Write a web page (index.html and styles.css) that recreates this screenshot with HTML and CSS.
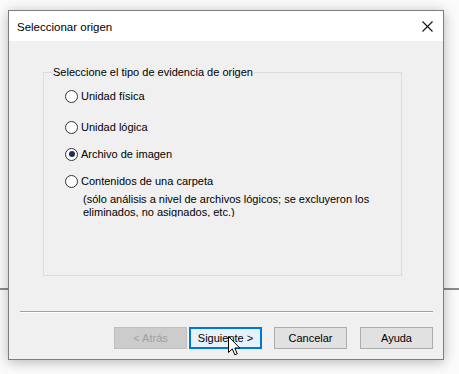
FILE: index.html
```html
<!DOCTYPE html>
<html lang="es">
<head>
<meta charset="utf-8">
<link rel="stylesheet" href="styles.css">
</head>
<body>
<div class="window">
  <div class="titlebar">
    <span class="title">Seleccionar origen</span>
    <svg class="close" width="11" height="11" viewBox="0 0 11 11"><path d="M0.5 0.5 L10.5 10.5 M10.5 0.5 L0.5 10.5" stroke="#111" stroke-width="1.1" fill="none"/></svg>
  </div>
  <div class="content">
    <fieldset class="group">
      <legend>Seleccione el tipo de evidencia de origen</legend>
      <div class="opt opt1"><span class="radio"></span><span>Unidad física</span></div>
      <div class="opt opt2"><span class="radio"></span><span>Unidad lógica</span></div>
      <div class="opt opt3"><span class="radio checked"></span><span>Archivo de imagen</span></div>
      <div class="opt opt4"><span class="radio"></span><span>Contenidos de una carpeta</span></div>
      <div class="desc">(sólo análisis a nivel de archivos lógicos; se excluyeron los eliminados, no asignados, etc.)</div>
    </fieldset>
    <div class="sep"></div>
    <div class="buttons">
      <div class="btn disabled">&lt; Atrás</div>
      <div class="btn default">Siguiente &gt;</div>
      <div class="btn cancel">Cancelar</div>
      <div class="btn">Ayuda</div>
    </div>
  </div>
</div>
<svg class="cursor" width="13" height="21" viewBox="0 0 13 21"><path d="M0.5 0.5 L0.5 16.5 L4.3 12.8 L6.8 18.8 L9.2 17.8 L6.8 12 L11.8 12 Z" fill="#fff" stroke="#000" stroke-width="1"/></svg>
</body>
</html>
```

FILE: styles.css
```css
html, body {
  margin: 0;
  padding: 0;
}
body {
  width: 459px;
  height: 374px;
  overflow: hidden;
  position: relative;
  background:
    linear-gradient(to bottom, transparent 288px, #8c8c8c 288px, #8c8c8c 290px, transparent 290px),
    #fbfbfb;
  font-family: "Liberation Sans", Arial, sans-serif;
  font-size: 11px;
  color: #000;
  padding-top: 10px;
  padding-left: 8px;
  box-sizing: border-box;
}
.window {
  width: 436px;
  height: 350px;
  box-sizing: border-box;
  border: 1px solid #7d7d7d;
  background: #f0f0f0;
  box-shadow: 0 2px 12px rgba(0, 0, 0, 0.28);
  display: flex;
  flex-direction: column;
}
.titlebar {
  height: 30px;
  background: #fff;
  display: flex;
  align-items: center;
  justify-content: space-between;
  padding: 0 10px 0 8px;
  flex: none;
}
.title {
  font-size: 11.5px;
  padding-top: 2px;
}
.close {
  display: block;
}
.content {
  flex: 1;
  display: flex;
  flex-direction: column;
  padding: 0 10px 0 11px;
}
.group {
  margin: 25px 31px 0 23px;
  padding: 0;
  height: 210px;
  box-sizing: border-box;
  border: 1px solid #dcdcdc;
  min-width: 0;
}
.group legend {
  margin-left: 8px;
  padding: 0 1px;
}
.opt {
  display: flex;
  align-items: center;
  margin-left: 21px;
  height: 16px;
}
.opt1 { margin-top: 10px; }
.opt2 { margin-top: 15px; }
.opt3 { margin-top: 11px; }
.opt4 { margin-top: 11px; }
.radio {
  width: 11px;
  height: 11px;
  border: 1px solid #333;
  border-radius: 50%;
  background: #fff;
  margin-right: 3px;
  position: relative;
  flex: none;
}
.radio.checked::after {
  content: "";
  position: absolute;
  left: 2.5px;
  top: 2.5px;
  width: 6px;
  height: 6px;
  border-radius: 50%;
  background: #1b2f55;
}
.desc {
  margin-left: 39px;
  margin-top: 4px;
  width: 300px;
  line-height: 13px;
  height: 24px;
  overflow: hidden;
}
.sep {
  margin: 35px 0 0 0;
  height: 1px;
  background: #a0a0a0;
  border-bottom: 1px solid #fff;
}
.buttons {
  display: flex;
  justify-content: flex-end;
  gap: 2px;
  margin-top: 14px;
}
.btn {
  width: 73px;
  height: 22px;
  box-sizing: border-box;
  border: 1px solid #adadad;
  background: #e1e1e1;
  display: flex;
  align-items: center;
  justify-content: center;
}
.btn.disabled {
  background: #cccccc;
  border-color: #bfbfbf;
  color: #a0a0a0;
}
.btn.default {
  border: 2px solid #0078d7;
  background: #e5f1fb;
  margin-right: 10px;
}
.btn.cancel {
  margin-right: 11px;
}
.cursor {
  position: absolute;
  left: 228px;
  top: 336px;
}
```
